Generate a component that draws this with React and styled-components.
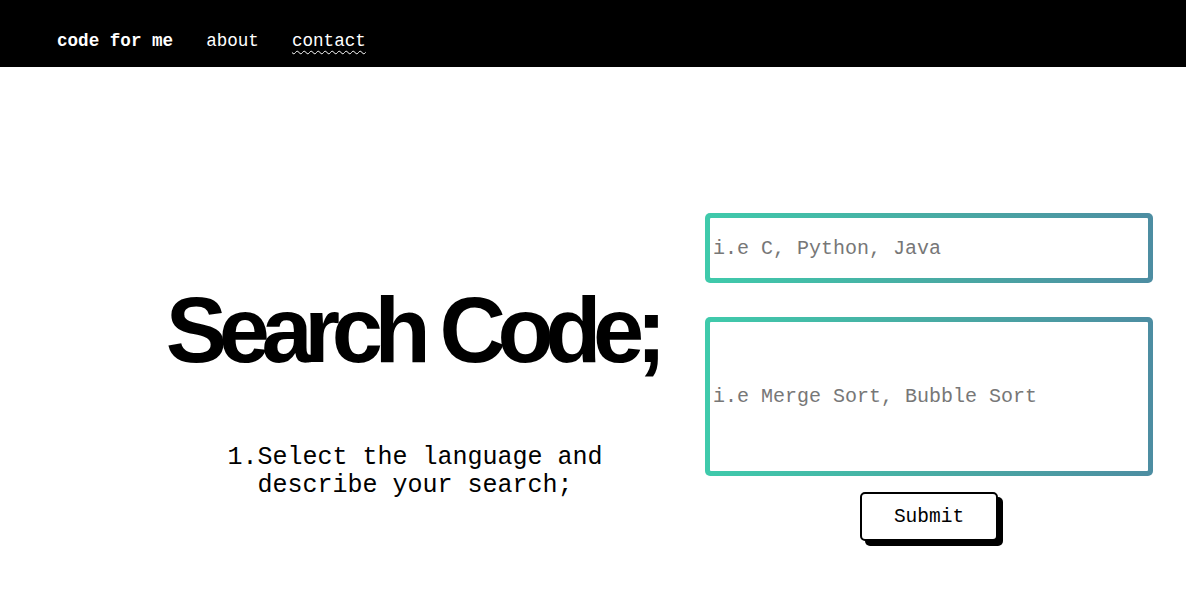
import React from "react";
import styled, { createGlobalStyle } from "styled-components";

const Global = createGlobalStyle`
  html, body { margin: 0; padding: 0; background: #fff; }
  body { font-family: "Liberation Mono", monospace; color: #000; min-height: 606px; }
  * { box-sizing: border-box; }
`;

const Nav = styled.nav`
  height: 67px;
  background: #000;
  display: flex;
  align-items: center;
  gap: 33px;
  padding: 15px 0 0 57px;
`;

const NavLink = styled.a`
  font-family: "Liberation Mono", monospace;
  font-size: 17.6px;
  color: #fff;
  font-weight: ${(p) => (p.$brand ? 700 : 400)};
  text-decoration: ${(p) => (p.$wavy ? "underline wavy #fff" : "none")};
  text-decoration-thickness: 1px;
  text-underline-offset: 4px;
  cursor: pointer;
`;

const Main = styled.main`
  display: flex;
  padding: 146px 0 60px 130px;
  gap: 7px;
`;

const Left = styled.section`
  width: 568px;
  display: flex;
  flex-direction: column;
  align-items: center;
  padding-top: 71px;
`;

const Heading = styled.h1`
  margin: 0;
  font-family: "Liberation Sans", Arial, sans-serif;
  font-weight: 700;
  font-size: 92px;
  line-height: 1;
  letter-spacing: -8.4px;
  padding-right: 4px;
`;

const Steps = styled.ol`
  margin: 68px 0 0 34px;
  padding: 0 0 0 29px;
  width: 405px;
  font-family: "Liberation Mono", monospace;
  font-size: 25px;
  line-height: 28px;
  li::marker { content: "1."; }
`;

const Right = styled.form`
  width: 448px;
  display: flex;
  flex-direction: column;
  align-items: center;
`;

const Frame = styled.div`
  width: 100%;
  height: ${(p) => p.$h}px;
  padding: 5px;
  border-radius: 5px;
  background: linear-gradient(90deg, #3fcaab 0%, #49a9a3 55%, #4d8da2 100%);
  margin-bottom: ${(p) => p.$mb}px;
`;

const Field = styled.input`
  width: 100%;
  height: 100%;
  border: none;
  border-radius: 1px;
  outline: none;
  background: #fff;
  padding: 0 0 0 3px;
  font-family: "Liberation Mono", monospace;
  font-size: 20px;
  color: #000;
  &::placeholder { color: #777; }
`;

const Submit = styled.button`
  width: 138px;
  height: 49px;
  background: #fff;
  border: 2px solid #000;
  border-radius: 5px;
  box-shadow: 5px 5px 0 #000;
  font-family: "Liberation Mono", monospace;
  font-size: 19.5px;
  color: #000;
  cursor: pointer;
  padding: 0;
`;

export default function App() {
  return (
    <>
      <Global />
      <Nav>
        <NavLink $brand>code for me</NavLink>
        <NavLink>about</NavLink>
        <NavLink $wavy>contact</NavLink>
      </Nav>
      <Main>
        <Left>
          <Heading>Search Code;</Heading>
          <Steps>
            <li>Select the language and describe your search;</li>
          </Steps>
        </Left>
        <Right onSubmit={(e) => e.preventDefault()}>
          <Frame $h={70} $mb={34}>
            <Field placeholder="i.e C, Python, Java" />
          </Frame>
          <Frame $h={159} $mb={16}>
            <Field placeholder="i.e Merge Sort, Bubble Sort" />
          </Frame>
          <Submit type="submit">Submit</Submit>
        </Right>
      </Main>
    </>
  );
}
